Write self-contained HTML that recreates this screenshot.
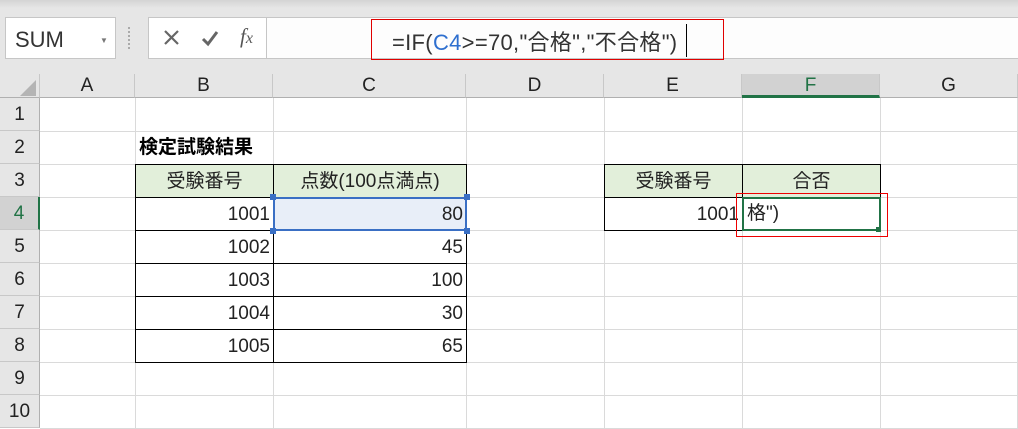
<!DOCTYPE html>
<html><head><meta charset="utf-8"><style>
*{margin:0;padding:0;box-sizing:border-box}
body{width:1018px;height:429px;overflow:hidden;background:#fff;position:relative;font-family:"Liberation Sans","Noto Sans CJK JP",sans-serif}
.a{position:absolute}
.top{left:0;top:0;width:1018px;height:98px;background:#e6e6e6}
.ch{top:74px;height:24px;font-size:19px;text-align:center;line-height:24px;border-right:1px solid #c8c8c8;border-bottom:1px solid #b0b0b0;color:#222}
.rh{left:0;width:40px;height:33px;font-size:19px;text-align:center;line-height:33px;background:#e6e6e6;border-bottom:1px solid #c8c8c8;border-right:1px solid #b0b0b0;color:#222}
.vl{top:98px;width:1px;height:331px;background:#dadada}
.hl{left:40px;width:978px;height:1px;background:#dadada}
.c{font-size:19px;line-height:33px;height:34px;color:#222;font-family:"Liberation Sans","Noto Sans CJK JP",sans-serif}
.bx{border:1px solid #000}
.g{background:#e2efda;text-align:center}
.r{text-align:right;padding-right:3px}
</style></head><body>
<div class="a top"></div>
<div class="a" style="left:0;top:0;width:1018px;height:8px;background:linear-gradient(#d4d4d4,#e6e6e6)"></div>
<!-- name box -->
<div class="a" style="left:5px;top:17px;width:111px;height:42px;background:#fff;border:1px solid #c6c6c6;font-size:22px;line-height:44px;padding-left:9px;color:#333;transform-origin:left;">SUM</div>
<div class="a" style="left:100px;top:36px;font-size:8px;color:#777">▼</div>
<div class="a" style="left:128px;top:27px;width:2px;height:22px;border-left:2px dotted #aaa"></div>
<!-- fx box -->
<div class="a" style="left:148px;top:17px;width:119px;height:42px;background:#fff;border:1px solid #c6c6c6"></div>
<svg class="a" style="left:160px;top:28px" width="100" height="22"><path d="M5 3L18 16M18 3L5 16" stroke="#666" stroke-width="2.2"/><path d="M43 11l5 5 9-12" stroke="#666" stroke-width="3" fill="none"/></svg>
<div class="a" style="left:240px;top:24px;font-family:'Liberation Serif',serif;font-style:italic;font-size:21px;color:#555">f<span style="font-size:16px">x</span></div>
<!-- formula bar -->
<div class="a" style="left:267px;top:17px;width:751px;height:42px;background:#fdfdfd;border-top:1px solid #c6c6c6;border-bottom:1px solid #c6c6c6"></div>
<div class="a" style="left:371px;top:19px;width:353px;height:41px;border:1.5px solid #e00000"></div>
<div class="a" style="left:392px;top:25px;font-size:22px;color:#333;white-space:nowrap;letter-spacing:0.3px">=IF(<span style="color:#2e6fcf">C4</span>&gt;=70,"合格","不合格")</div>
<div class="a" style="left:686px;top:24px;width:1px;height:33px;background:#000"></div>
<!-- corner -->
<div class="a" style="left:0;top:74px;width:40px;height:24px;border-right:1px solid #c8c8c8;border-bottom:1px solid #b0b0b0"></div>
<svg class="a" style="left:20px;top:80px" width="16" height="16"><path d="M16 0L16 16L0 16Z" fill="#b4b4b4"/></svg>
<!-- column headers -->
<div class="a ch" style="left:40px;width:95px">A</div>
<div class="a ch" style="left:135px;width:138px">B</div>
<div class="a ch" style="left:273px;width:193px">C</div>
<div class="a ch" style="left:466px;width:138px">D</div>
<div class="a ch" style="left:604px;width:138px">E</div>
<div class="a ch" style="left:742px;width:138px;background:#d2d2d2;color:#217346;border-bottom:3px solid #217346">F</div>
<div class="a ch" style="left:880px;width:138px">G</div>
<!-- row headers -->
<div class="a rh" style="top:98px">1</div>
<div class="a rh" style="top:131px">2</div>
<div class="a rh" style="top:164px">3</div>
<div class="a rh" style="top:197px;background:#d2d2d2;color:#217346;border-right:2px solid #217346">4</div>
<div class="a rh" style="top:230px">5</div>
<div class="a rh" style="top:263px">6</div>
<div class="a rh" style="top:296px">7</div>
<div class="a rh" style="top:329px">8</div>
<div class="a rh" style="top:362px">9</div>
<div class="a rh" style="top:395px">10</div>
<!-- grid -->
<div class="a vl" style="left:135px"></div><div class="a vl" style="left:273px"></div><div class="a vl" style="left:466px"></div><div class="a vl" style="left:604px"></div><div class="a vl" style="left:742px"></div><div class="a vl" style="left:880px"></div><div class="a vl" style="left:1017px"></div>
<div class="a hl" style="top:131px"></div><div class="a hl" style="top:164px"></div><div class="a hl" style="top:197px"></div><div class="a hl" style="top:230px"></div><div class="a hl" style="top:263px"></div><div class="a hl" style="top:296px"></div><div class="a hl" style="top:329px"></div><div class="a hl" style="top:362px"></div><div class="a hl" style="top:395px"></div><div class="a hl" style="top:428px"></div>
<!-- content -->
<div class="a c" style="left:139px;top:131px;font-weight:bold;color:#000">検定試験結果</div>
<div class="a c bx g" style="left:135px;top:164px;width:139px">受験番号</div>
<div class="a c bx g" style="left:273px;top:164px;width:194px">点数(100点満点)</div>
<div class="a c bx r" style="left:135px;top:197px;width:139px">1001</div>
<div class="a c bx r" style="left:273px;top:197px;width:194px;background:#e8eef8">80</div>
<div class="a c bx r" style="left:135px;top:230px;width:139px">1002</div>
<div class="a c bx r" style="left:273px;top:230px;width:194px">45</div>
<div class="a c bx r" style="left:135px;top:263px;width:139px">1003</div>
<div class="a c bx r" style="left:273px;top:263px;width:194px">100</div>
<div class="a c bx r" style="left:135px;top:296px;width:139px">1004</div>
<div class="a c bx r" style="left:273px;top:296px;width:194px">30</div>
<div class="a c bx r" style="left:135px;top:329px;width:139px">1005</div>
<div class="a c bx r" style="left:273px;top:329px;width:194px">65</div>
<!-- C4 ref highlight -->
<div class="a" style="left:273px;top:197px;width:194px;height:34px;border:2px solid #3a6fc4"></div>
<div class="a" style="left:270px;top:194px;width:6px;height:6px;background:#3a6fc4"></div>
<div class="a" style="left:464px;top:194px;width:6px;height:6px;background:#3a6fc4"></div>
<div class="a" style="left:270px;top:228px;width:6px;height:6px;background:#3a6fc4"></div>
<div class="a" style="left:464px;top:228px;width:6px;height:6px;background:#3a6fc4"></div>
<!-- right table -->
<div class="a c bx g" style="left:604px;top:164px;width:139px">受験番号</div>
<div class="a c bx g" style="left:742px;top:164px;width:139px">合否</div>
<div class="a c bx r" style="left:604px;top:197px;width:139px">1001</div>
<div class="a" style="left:742px;top:197px;width:139px;height:34px;border:2px solid #217346;background:#fff"></div>
<div class="a" style="left:876px;top:227px;width:5px;height:5px;background:#217346"></div>
<div class="a c" style="left:747px;top:197px">格")</div>
<div class="a" style="left:736px;top:193px;width:152px;height:44px;border:1px solid #e00"></div>
</body></html>
